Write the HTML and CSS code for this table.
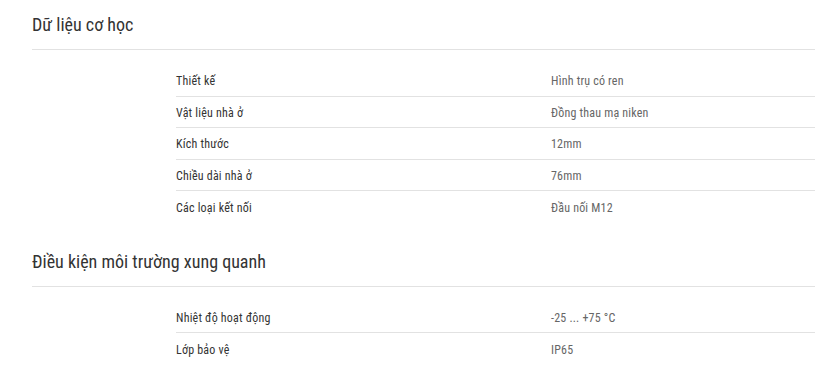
FILE: index.html
```html
<!DOCTYPE html>
<html lang="vi">
<head>
<meta charset="utf-8">
<link rel="stylesheet" href="styles.css">
</head>
<body>
<div class="page">
  <section class="section">
    <h2 class="section-title">Dữ liệu cơ học</h2>
    <div class="spec-table">
      <div class="row"><span class="label">Thiết kế</span><span class="value">Hình trụ có ren</span></div>
      <div class="row"><span class="label">Vật liệu nhà ở</span><span class="value">Đồng thau mạ niken</span></div>
      <div class="row"><span class="label">Kích thước</span><span class="value">12mm</span></div>
      <div class="row"><span class="label">Chiều dài nhà ở</span><span class="value">76mm</span></div>
      <div class="row"><span class="label">Các loại kết nối</span><span class="value">Đầu nối M12</span></div>
    </div>
  </section>
  <section class="section">
    <h2 class="section-title">Điều kiện môi trường xung quanh</h2>
    <div class="spec-table">
      <div class="row"><span class="label">Nhiệt độ hoạt động</span><span class="value">-25 ... +75 °C</span></div>
      <div class="row"><span class="label">Lớp bảo vệ</span><span class="value">IP65</span></div>
    </div>
  </section>
</div>
</body>
</html>
```
FILE: styles.css
```css
html, body {
  margin: 0;
  padding: 0;
  background: #fff;
}
body {
  font-family: Roboto, "Noto Sans", sans-serif;
  font-stretch: 87.5%;
  color: #333;
}
.page {
  padding-left: 32px;
}
.section {
  padding-bottom: 14px;
}
.section-title {
  margin: 0;
  font-size: 18px;
  font-weight: 400;
  line-height: 24px;
  padding: 13px 0 12px;
  border-bottom: 1px solid #e2e2e2;
  color: #333;
}
.spec-table {
  margin-left: 144px;
  margin-top: 15px;
}
.row {
  display: grid;
  grid-template-columns: 375px 1fr;
  height: 31.5px;
  padding-top: 2px;
  align-items: center;
  border-bottom: 1px solid #e2e2e2;
  box-sizing: border-box;
  font-size: 12px;
  letter-spacing: 0.2px;
}
.row:last-child {
  border-bottom: none;
}
.label {
  color: #333;
}
.value {
  color: #666;
}
```
